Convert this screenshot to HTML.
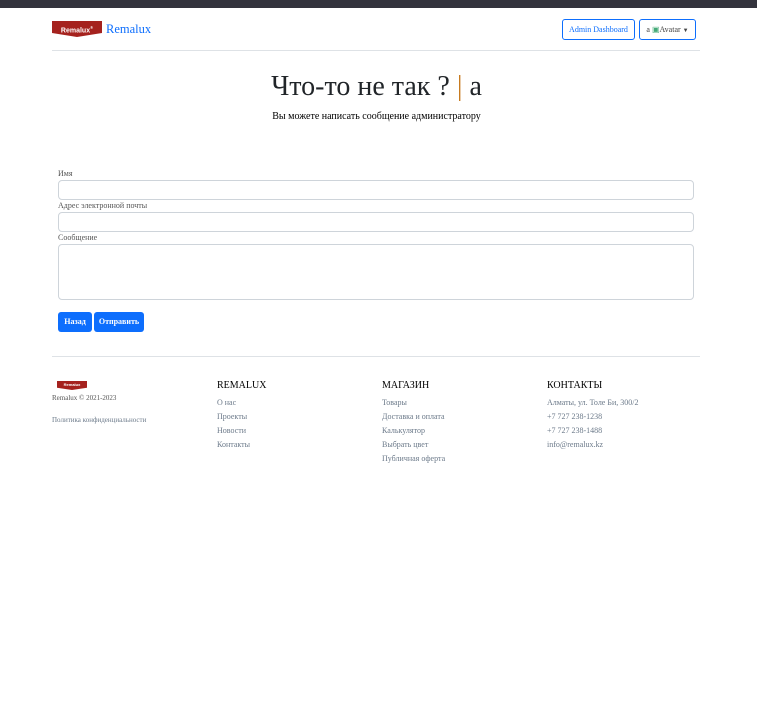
<!DOCTYPE html>
<html><head><meta charset="utf-8"><style>
*{box-sizing:border-box;margin:0;padding:0}
body{width:757px;height:726px;background:#fff;font-family:"Liberation Serif",serif;color:#212529;position:relative;overflow:hidden}
.topbar{position:absolute;left:0;top:0;width:757px;height:8px;background:#33333d}
.a{position:absolute;white-space:nowrap}
.hr{position:absolute;left:52px;width:648px;height:1px;background:#dee2e6}
.logo{position:absolute;background:#a5221e;color:#fff;font-family:"Liberation Sans",sans-serif;font-weight:bold;text-align:center;clip-path:polygon(0 0,100% 0,100% 75%,50% 100%,0 75%)}
.btn-o{position:absolute;border:1px solid #0d6efd;border-radius:3px;color:#0d6efd;font-size:8px;text-align:center}
.inp{position:absolute;left:58px;width:636px;border:1px solid #ced4da;border-radius:4px}
.lbl{position:absolute;left:58px;font-size:8px;color:#555}
.btn{position:absolute;top:312px;height:20px;background:#0d6efd;color:#fff;border-radius:3px;font-size:8px;font-weight:bold;text-align:center;line-height:20px}
.fh{position:absolute;font-size:10px;color:#000}
.fl{position:absolute;font-size:8px;color:#6c7a8a}
</style></head><body>
<div class="topbar"></div>
<div class="logo" style="left:52px;top:21px;width:50px;height:16px;font-size:7px;line-height:13px">Remalux<sup style="font-size:4px">®</sup></div>
<div class="a" style="left:106px;top:22px;font-size:12.5px;color:#0d6efd">Remalux</div>
<div class="btn-o" style="left:562px;top:19px;width:73px;height:21px;line-height:19px">Admin Dashboard</div>
<div class="btn-o" style="left:639px;top:19px;width:57px;height:21px;line-height:19px;color:#444">a <span style="color:#4a7">▣</span>Avatar <span style="font-size:6px">▼</span></div>
<div class="hr" style="top:50px"></div>
<div class="a" style="left:-2px;width:757px;text-align:center;top:71px;font-size:28px">Что-то не так ? <span style="color:#c77b20">|</span> a</div>
<div class="a" style="left:-2px;width:757px;text-align:center;top:111px;font-size:10px;color:#000">Вы можете написать сообщение администратору</div>
<div class="lbl" style="top:169px">Имя</div>
<div class="inp" style="top:180px;height:20px"></div>
<div class="lbl" style="top:201px">Адрес электронной почты</div>
<div class="inp" style="top:212px;height:20px"></div>
<div class="lbl" style="top:233px">Сообщение</div>
<div class="inp" style="top:244px;height:56px"></div>
<div class="btn" style="left:58px;width:34px">Назад</div>
<div class="btn" style="left:94px;width:50px">Отправить</div>
<div class="hr" style="top:356px"></div>
<div class="logo" style="left:57px;top:381px;width:30px;height:9px;font-size:4px;line-height:7px">Remalux</div>
<div class="a" style="left:52px;top:394px;font-size:7px;color:#555">Remalux © 2021-2023</div>
<div class="a" style="left:52px;top:416px;font-size:7px;color:#6c7a8a">Политика конфиденциальности</div>
<div class="fh" style="left:217px;top:380px">REMALUX</div>
<div class="fl" style="left:217px;top:398px">О нас</div>
<div class="fl" style="left:217px;top:412px">Проекты</div>
<div class="fl" style="left:217px;top:426px">Новости</div>
<div class="fl" style="left:217px;top:440px">Контакты</div>
<div class="fh" style="left:382px;top:380px">МАГАЗИН</div>
<div class="fl" style="left:382px;top:398px">Товары</div>
<div class="fl" style="left:382px;top:412px">Доставка и оплата</div>
<div class="fl" style="left:382px;top:426px">Калькулятор</div>
<div class="fl" style="left:382px;top:440px">Выбрать цвет</div>
<div class="fl" style="left:382px;top:454px">Публичная оферта</div>
<div class="fh" style="left:547px;top:380px">КОНТАКТЫ</div>
<div class="fl" style="left:547px;top:398px">Алматы, ул. Толе Би, 300/2</div>
<div class="fl" style="left:547px;top:412px">+7 727 238-1238</div>
<div class="fl" style="left:547px;top:426px">+7 727 238-1488</div>
<div class="fl" style="left:547px;top:440px">info@remalux.kz</div>
</body></html>
